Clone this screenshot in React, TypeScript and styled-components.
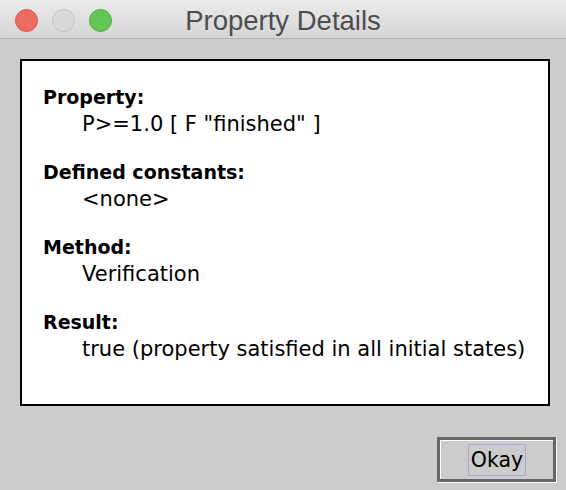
import React from "react";
import styled, { createGlobalStyle } from "styled-components";

const GlobalStyle = createGlobalStyle`
  html, body {
    margin: 0;
    padding: 0;
    width: 566px;
    height: 490px;
    overflow: hidden;
    background: #cccccc;
  }
  * { box-sizing: border-box; }
`;

const Window = styled.div`
  width: 566px;
  height: 490px;
  display: flex;
  flex-direction: column;
  background: #cccccc;
  font-family: "DejaVu Sans", Verdana, sans-serif;
  color: #000;
`;

const TitleBar = styled.div`
  height: 39px;
  flex: none;
  display: grid;
  grid-template-columns: 1fr auto 1fr;
  align-items: center;
  background: linear-gradient(#ebebeb, #d5d5d5);
  border-bottom: 1px solid #b3b3b3;
`;

const Lights = styled.div`
  display: flex;
  align-items: center;
  gap: 14px;
  padding-left: 15px;
`;

const Light = styled.span<{ $fill: string; $edge: string }>`
  width: 23px;
  height: 23px;
  border-radius: 50%;
  background: ${(p) => p.$fill};
  border: 1px solid ${(p) => p.$edge};
`;

const Title = styled.div`
  font-family: "Liberation Sans", Arial, sans-serif;
  font-size: 27.5px;
  color: #4d4d4d;
  line-height: 39px;
  padding-top: 1px;
`;

const Body = styled.div`
  flex: 1;
  display: flex;
  flex-direction: column;
  padding: 20px 0 0 20px;
`;

const Panel = styled.div`
  height: 347px;
  margin-right: 16px;
  background: #ffffff;
  border: 2px solid #000000;
  padding: 23px 0 0 21px;
  display: flex;
  flex-direction: column;
  gap: 21px;
`;

const Group = styled.div`
  display: flex;
  flex-direction: column;
`;

const Label = styled.div`
  font-weight: bold;
  font-size: 19px;
  line-height: 27px;
`;

const Value = styled.div`
  font-size: 21px;
  line-height: 27px;
  padding-left: 39px;
  white-space: nowrap;
`;

const Footer = styled.div`
  display: flex;
  justify-content: flex-end;
  padding: 31px 10px 0 0;
`;

const Button = styled.button`
  width: 119px;
  height: 45px;
  padding: 0;
  margin: 0;
  border: 3px solid #666666;
  background: #cccccc;
  box-shadow: inset 1px 1px 0 #ffffff, 1px 1px 0 #ffffff;
  display: flex;
  align-items: center;
  justify-content: center;
  font-family: "DejaVu Sans", Verdana, sans-serif;
  font-size: 20.5px;
  color: #000;
`;

const Focus = styled.span`
  display: inline-flex;
  align-items: center;
  justify-content: center;
  width: 58px;
  height: 32px;
  border: 1px solid #a6a6dd;
  margin-left: 1px;
  margin-top: 1px;
`;

const rows = [
  { label: "Property:", value: 'P>=1.0 [ F "finished" ]' },
  { label: "Defined constants:", value: "<none>" },
  { label: "Method:", value: "Verification" },
  { label: "Result:", value: "true (property satisfied in all initial states)" },
];

export default function App() {
  return (
    <>
      <GlobalStyle />
      <Window>
        <TitleBar>
          <Lights>
            <Light $fill="#ee6b60" $edge="#d35a50" />
            <Light $fill="#d9d9d9" $edge="#c2c2c2" />
            <Light $fill="#62c655" $edge="#50ab43" />
          </Lights>
          <Title>Property Details</Title>
          <div />
        </TitleBar>
        <Body>
          <Panel>
            {rows.map((r) => (
              <Group key={r.label}>
                <Label>{r.label}</Label>
                <Value>{r.value}</Value>
              </Group>
            ))}
          </Panel>
          <Footer>
            <Button>
              <Focus>Okay</Focus>
            </Button>
          </Footer>
        </Body>
      </Window>
    </>
  );
}
